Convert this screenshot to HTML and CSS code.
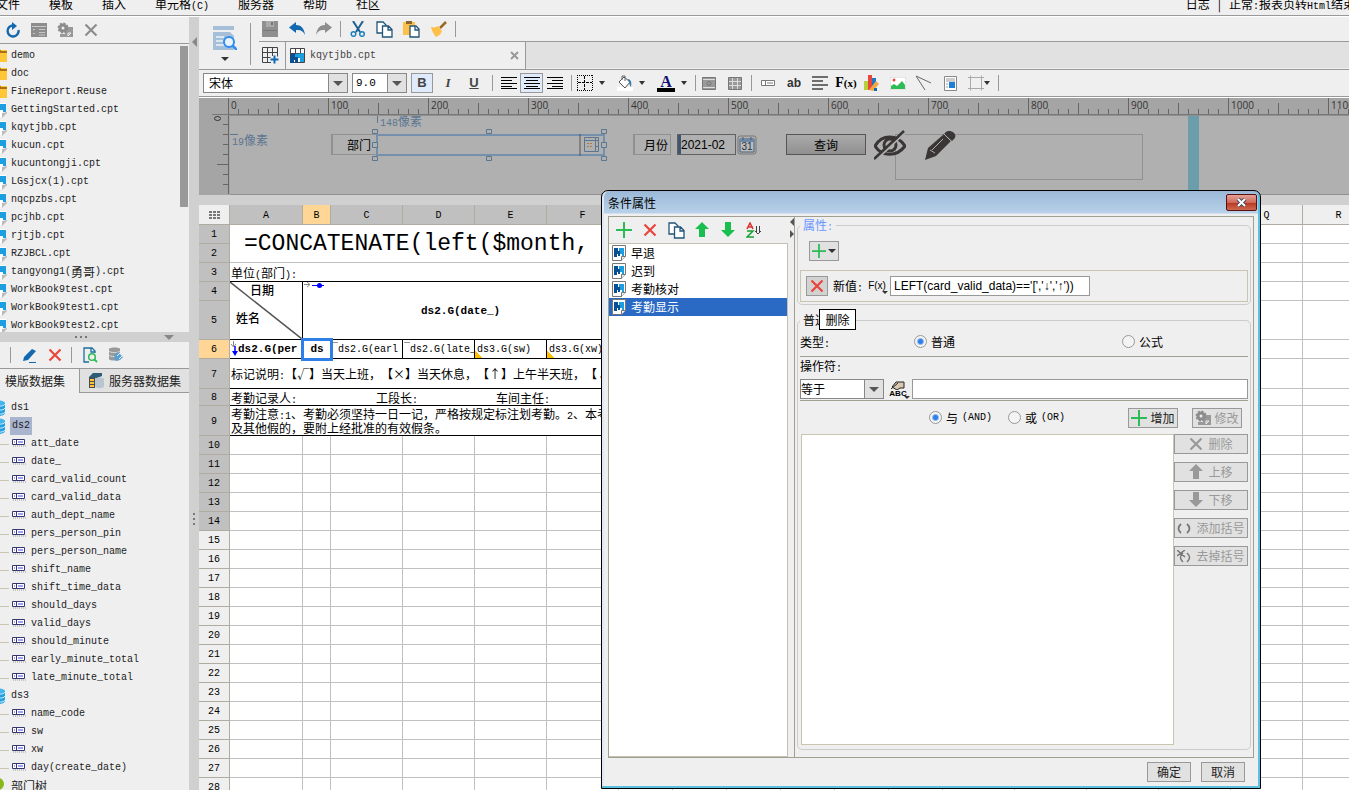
FILE: index.html
```html
<!DOCTYPE html>
<html lang="zh-CN">
<head>
<meta charset="utf-8">
<title>kqytjbb.cpt</title>
<link rel="stylesheet" href="styles.css">
</head>
<body>
<svg class="defs" aria-hidden="true">
  <symbol id="folder" viewBox="0 0 16 16"><path d="M0 2h16v12H0z" fill="#ffc637"/><path d="M0 1h9l1 2h6v2H0z" fill="#a96f14"/></symbol>
  <symbol id="cpt" viewBox="0 0 16 16"><path d="M1 1h14v9l-5 5H1z" fill="#fff"/><path d="M3 2h12v8h-3V8H8v4H3z" fill="#1b9fe0"/><path d="M16 10v1l-5 5v-5z" fill="#bbb"/></symbol>
  <symbol id="rpt" viewBox="0 0 14 16"><path d="M.5.5h13v11l-4 4h-9z" fill="#fff" stroke="#777"/><path d="M2 3h4v3h2v5H6V9H5v3H2z" fill="#0b4f93"/><path d="M7 3h5v9h-2V9H8V6H7z" fill="#1b9fe0"/><path d="M9.500 15.500v-4h4" fill="#eee" stroke="#777"/></symbol>
  <symbol id="db" viewBox="0 0 16 16"><path d="M1 3v10c0 4 14 4 14 0V3z" fill="#26a0e0"/><ellipse cx="8" cy="3" rx="7" ry="2.500" fill="#45b5ee"/><path d="M1 4c0 3 14 3 14 0M1 8c0 3 14 3 14 0M1 12c0 3 14 3 14 0" fill="none" stroke="#d8effb"/></symbol>
  <symbol id="field" viewBox="0 0 14 8"><path d="M.5.5h12v5H.5zM4.500 1v4" fill="#fff" stroke="#34386e"/><path d="M2 3h1M6 3h5" stroke="#3c3cff"/><path d="M1 7h13" stroke="#999" stroke-dasharray="1 1"/></symbol>
  <symbol id="tree" viewBox="0 0 16 16"><circle cx="8" cy="6" r="6" fill="#86b817"/><path d="M7 11h3v5H7z" fill="#8a5a2b"/></symbol>
  <symbol id="cross" viewBox="0 0 14 14"><path d="M1.500 1.500l11 11M12.500 1.500l-11 11" fill="none" stroke="currentColor" stroke-width="2.200"/></symbol>
  <symbol id="plus" viewBox="0 0 16 16"><path d="M8 0v16M0 8h16" stroke="#2dbb55" stroke-width="2"/></symbol>
  <symbol id="up" viewBox="0 0 14 16"><path d="M7 0l7 7h-4v8H4V7H0z" fill="currentColor"/></symbol>
  <symbol id="down" viewBox="0 0 14 16"><path d="M7 15L0 8h4V0h6v8h4z" fill="currentColor"/></symbol>
  <symbol id="gear" viewBox="0 0 16 16"><path d="M8 5h8v10H3v-3h5z" fill="#999"/><circle cx="6" cy="6" r="4.500" fill="#8c8c8c" stroke="#8c8c8c" stroke-width="2" stroke-dasharray="2 1.500"/><circle cx="6" cy="6" r="1.500" fill="#eee"/><path d="M11 14v-3h3z" fill="none" stroke="#eee"/></symbol>
  <symbol id="copy" viewBox="0 0 17 17"><path d="M1 1h6l3 3v8H1z" fill="#fff" stroke="#22557a" stroke-width="1.300"/><path d="M6.500 5h6l3.500 3.500V16H6.500zM12 5v4h4" fill="#fff" stroke="#22557a" stroke-width="1.300"/></symbol>
  <symbol id="undo" viewBox="0 0 16 16"><path d="M0 6.500L7 1v3c5 0 8 3 9 10-2-4-4-5.500-9-5v3z" fill="currentColor"/></symbol>
  <symbol id="lines" viewBox="0 0 16 14"><path d="M0 1h16M0 5h11M0 9h16M0 13h11" stroke="#444" stroke-width="1.500"/></symbol>
  <symbol id="cal" viewBox="0 0 20 20"><rect x="1" y="1" width="18" height="18" rx="2" fill="#b0b0b0" stroke="#777"/><path d="M3 4h14v13H3z" fill="#bbb" stroke="#456080"/><path d="M3 4h14v3H3z" fill="#6d88a5"/><path d="M6 2v3M14 2v3" stroke="#456080"/></symbol>
  <symbol id="grip" viewBox="0 0 4 12"><path d="M2 0v12" stroke="#777" stroke-width="2" stroke-dasharray="2 3"/></symbol>
</svg>

<nav class="menubar">
  <span>文件</span><span>模板</span><span>插入</span><span>单元格<i class="m">(C)</i></span><span>服务器</span><span>帮助</span><span>社区</span>
  <span class="log">日志</span><span class="bar">|</span><span class="state">正常<i class="m">:</i>报表页转<i class="m">Html</i>结束</span>
</nav>

<div class="workspace">
  <aside class="sidebar">
    <div class="side-tools">
      <button aria-label="刷新"><svg width="14" height="16" viewBox="0 0 14 16"><path d="M12.500 8a5.500 5.500 0 1 1-5-4.500" fill="none" stroke="#1269b0" stroke-width="2.400"/><path d="M6 0l5 4-5 4z" fill="#1269b0"/></svg></button>
      <button aria-label="属性"><svg width="16" height="14" viewBox="0 0 16 14"><path d="M0 0h16v14H0z" fill="#8d8d8d"/><path d="M1 3.500h14M2 6.500h2M2 10.500h2M8 6.500h6M8 9.500h6M8 12h6" stroke="#c8c8c8"/></svg></button>
      <button aria-label="设置"><svg width="16" height="16"><use href="#gear"/></svg></button>
      <button class="gray" aria-label="删除"><svg width="14" height="14"><use href="#cross"/></svg></button>
    </div>
    <div class="files">
      <ul class="tree m">
        <li><svg><use href="#folder"/></svg>demo</li>
        <li><svg><use href="#folder"/></svg>doc</li>
        <li><svg><use href="#folder"/></svg>FineReport.Reuse</li>
        <li><svg><use href="#cpt"/></svg>GettingStarted.cpt</li>
        <li><svg><use href="#cpt"/></svg>kqytjbb.cpt</li>
        <li><svg><use href="#cpt"/></svg>kucun.cpt</li>
        <li><svg><use href="#cpt"/></svg>kucuntongji.cpt</li>
        <li><svg><use href="#cpt"/></svg>LGsjcx(1).cpt</li>
        <li><svg><use href="#cpt"/></svg>nqcpzbs.cpt</li>
        <li><svg><use href="#cpt"/></svg>pcjhb.cpt</li>
        <li><svg><use href="#cpt"/></svg>rjtjb.cpt</li>
        <li><svg><use href="#cpt"/></svg>RZJBCL.cpt</li>
        <li><svg><use href="#cpt"/></svg>tangyong1(<b class="h">勇哥</b>).cpt</li>
        <li><svg><use href="#cpt"/></svg>WorkBook9test.cpt</li>
        <li><svg><use href="#cpt"/></svg>WorkBook9test1.cpt</li>
        <li><svg><use href="#cpt"/></svg>WorkBook9test2.cpt</li>
      </ul>
      <div class="scroll"><div class="thumb"></div></div>
    </div>
    <div class="hsplit"><svg width="12" height="4" viewBox="0 0 12 4"><path d="M0 2h12" stroke="#777" stroke-width="2" stroke-dasharray="2 3"/></svg><svg width="10" height="5" viewBox="0 0 10 5"><path d="M0 0h10L5 5z" fill="#888"/></svg></div>
    <div class="side-tools data-tools">
      <i class="vsep"></i>
      <button aria-label="编辑"><svg width="15" height="15" viewBox="0 0 15 15"><path d="M1 13l1-4 8-8 4 2-8 9z" fill="#1269b0"/><path d="M7 14.500h7" stroke="#1269b0"/></svg></button>
      <button class="red" aria-label="删除"><svg width="14" height="14"><use href="#cross"/></svg></button>
      <i class="vsep"></i>
      <button aria-label="预览"><svg width="15" height="16" viewBox="0 0 15 16"><path d="M12 6V4L9 1H1v14h5M8 1v4h4" fill="none" stroke="#1d6f9c" stroke-width="1.300"/><circle cx="9" cy="10" r="3.300" fill="none" stroke="#2dbb55" stroke-width="1.500"/><path d="M11 12l3 3" stroke="#2dbb55" stroke-width="1.800"/></svg></button>
      <button aria-label="连接"><svg width="16" height="16" viewBox="0 0 16 16"><path d="M1 2c0-2 11-2 11 0v10c0 2-11 2-11 0z" fill="#999"/><path d="M1 4c0 2 11 2 11 0M1 8c0 2 11 2 11 0" stroke="#ddd" fill="none"/><path d="M10 5l5 5-3 3-4 1-2-3 1-4z" fill="#5b9fd0"/><path d="M9 9l4-4M11 12l3-3" stroke="#e6f2fa"/></svg></button>
    </div>
    <div class="side-tabs">
      <button class="on">模版数据集</button>
      <button><svg width="17" height="16" viewBox="0 0 17 16"><path d="M1 4l4-4h9v3l-5 2H1z" fill="#2f5d77"/><path d="M1 5h6v10H1z" fill="#4a4a4a"/><path d="M2 7h4M2 10h4M2 13h4" stroke="#ffc637" stroke-width="2"/><path d="M7 6c0-2 9-2 9 0v7c0 3-9 3-9 0z" fill="#b9c6cf"/></svg>服务器数据集</button>
    </div>
    <ul class="tree data m">
      <li><svg><use href="#db"/></svg>ds1</li>
      <li><svg><use href="#db"/></svg><mark>ds2</mark></li>
      <li class="f"><svg><use href="#field"/></svg>att_date</li>
      <li class="f"><svg><use href="#field"/></svg>date_</li>
      <li class="f"><svg><use href="#field"/></svg>card_valid_count</li>
      <li class="f"><svg><use href="#field"/></svg>card_valid_data</li>
      <li class="f"><svg><use href="#field"/></svg>auth_dept_name</li>
      <li class="f"><svg><use href="#field"/></svg>pers_person_pin</li>
      <li class="f"><svg><use href="#field"/></svg>pers_person_name</li>
      <li class="f"><svg><use href="#field"/></svg>shift_name</li>
      <li class="f"><svg><use href="#field"/></svg>shift_time_data</li>
      <li class="f"><svg><use href="#field"/></svg>should_days</li>
      <li class="f"><svg><use href="#field"/></svg>valid_days</li>
      <li class="f"><svg><use href="#field"/></svg>should_minute</li>
      <li class="f"><svg><use href="#field"/></svg>early_minute_total</li>
      <li class="f"><svg><use href="#field"/></svg>late_minute_total</li>
      <li><svg><use href="#db"/></svg>ds3</li>
      <li class="f"><svg><use href="#field"/></svg>name_code</li>
      <li class="f"><svg><use href="#field"/></svg>sw</li>
      <li class="f"><svg><use href="#field"/></svg>xw</li>
      <li class="f"><svg><use href="#field"/></svg>day(create_date)</li>
      <li><svg><use href="#tree"/></svg><b class="h">部门树</b></li>
    </ul>
  </aside>

  <div class="vsplit"><svg width="5" height="10" viewBox="0 0 5 10"><path d="M5 0v10L0 5z" fill="#888"/></svg><svg class="grip" width="4" height="12"><use href="#grip"/></svg></div>

  <main class="editor">
    <header class="top">
      <button class="preview" aria-label="预览"><svg width="24" height="24" viewBox="0 0 24 24"><path d="M0 0h21v4H0zM0 6h17l4 4v14H0z" fill="#a5bfd8"/><path d="M3 11h8M3 15h7M3 19h8" stroke="#eef3f8" stroke-width="1.500"/><circle cx="16" cy="16" r="5" fill="#eaf2fb" stroke="#2f8cf0" stroke-width="2"/><path d="M19.500 19.500L24 24" stroke="#2f8cf0" stroke-width="2.500"/></svg><i class="caret"></i></button>
      <i class="tall-sep"></i>
      <div class="top-main">
        <div class="tools">
          <button aria-label="保存"><svg width="16" height="16" viewBox="0 0 16 16"><path d="M0 0h16v16H0z" fill="#8f8f8f"/><path d="M4 0h8v6H4z" fill="#aaa"/><path d="M9 1h2v3H9zM1 9h14v1H1z" fill="#777"/></svg></button>
          <button class="blue" aria-label="撤销"><svg width="16" height="16"><use href="#undo"/></svg></button>
          <button class="gray flip" aria-label="重做"><svg width="16" height="16"><use href="#undo"/></svg></button>
          <i class="vsep"></i>
          <button aria-label="剪切"><svg width="16" height="16" viewBox="0 0 16 16"><path d="M3 0l7 11M13 0L6 11" stroke="#1d5f93" stroke-width="2"/><circle cx="3.500" cy="13" r="2.300" fill="none" stroke="#1d80c0" stroke-width="1.500"/><circle cx="12" cy="13" r="2.300" fill="none" stroke="#1d80c0" stroke-width="1.500"/></svg></button>
          <button aria-label="复制"><svg width="17" height="17"><use href="#copy"/></svg></button>
          <button aria-label="粘贴"><svg width="17" height="17" viewBox="0 0 17 17"><path d="M0 1h12v13H0z" fill="#ffc04a"/><path d="M3 0h6v3H3z" fill="#8b6630"/><path d="M7 5h6l3 3v8H7zM12 5v4h4" fill="#fff" stroke="#22557a" stroke-width="1.300"/></svg></button>
          <button aria-label="格式刷"><svg width="16" height="16" viewBox="0 0 16 16"><path d="M9 7l6-6" stroke="#9a6a25" stroke-width="2.500"/><path d="M0 6c4 1 5 0 7-1l4 5c-1 3-3 5-6 6-2-3-4-5-5-10z" fill="#ffc04a"/></svg></button>
          <i class="vsep"></i>
        </div>
        <div class="doc-tabs">
          <button class="new" aria-label="新建"><svg width="17" height="17" viewBox="0 0 17 17"><path d="M.5.5h15v9M9 15.500H.5V.5M.5 5.500h15M.5 10.500h8M5.500 1v14M10.500 1v8" fill="none" stroke="#444"/><path d="M12.500 8.500v8M8.500 12.500h8" stroke="#1269b0" stroke-width="2"/></svg></button>
          <div class="doc-tab m"><svg width="15" height="15" viewBox="0 0 15 15"><path d="M.5.5h14v14H.5zM5.500 0v6M10.500 0v6M0 5.500h15" fill="#fff" stroke="#444"/><path d="M0 6h5v3h3v6H5v-3H4v3H0z" fill="#0b4f93"/><path d="M5 6l9-1v9h-4v-4H8V9H5z" fill="#1b9fe0"/></svg>kqytjbb.cpt<button aria-label="关闭"><svg width="9" height="9" viewBox="0 0 9 9"><path d="M1 1l7 7M8 1L1 8" stroke="#999" stroke-width="2"/></svg></button></div>
          <div class="rest"></div>
        </div>
      </div>
    </header>

    <div class="format">
      <div class="combo font"><select aria-label="字体"><option>宋体</option></select><i><b class="caret"></b></i></div>
      <div class="combo size"><select class="m" aria-label="字号"><option>9.0</option></select><i><b class="caret"></b></i></div>
      <button class="t on"><b>B</b></button><button class="t it">I</button><button class="t un">U</button>
      <i class="vsep w3"></i>
      <button class="al" aria-label="左对齐"><svg width="16" height="12" viewBox="0 0 16 12"><path d="M0 .5h16M0 3.500h11M0 6.500h16M0 9.500h11M0 11.500h16" stroke="#000"/></svg></button>
      <button class="al on" aria-label="居中"><svg width="16" height="12" viewBox="0 0 16 12"><path d="M0 .5h16M2 3.500h12M0 6.500h16M2 9.500h12M0 11.500h16" stroke="#000"/></svg></button>
      <button class="al" aria-label="右对齐"><svg width="16" height="12" viewBox="0 0 16 12"><path d="M0 .5h16M5 3.500h11M0 6.500h16M5 9.500h11M0 11.500h16" stroke="#000"/></svg></button>
      <i class="vsep w5"></i>
      <button class="dd" aria-label="边框"><svg width="16" height="16" viewBox="0 0 16 16"><path d="M0 .5h16M0 15.500h16M.5 0v16M15.500 0v16" stroke="#000" stroke-dasharray="1 1"/><path d="M7.500 1v14M1 7.500h14" stroke="#000" stroke-dasharray="3 1"/></svg><i class="caret"></i></button>
      <button class="dd" aria-label="填充"><svg width="16" height="16" viewBox="0 0 16 16"><path d="M0 12h16v4H0z" fill="#fff"/><path d="M2 7l5-5 6 5-5 6z" fill="#fff" stroke="#555"/><path d="M5 5V1h3v5" fill="none" stroke="#666"/><path d="M10 4c4 0 5 3 4 8-2-2-1-5-4-8z" fill="#3a78a8"/></svg><i class="caret"></i></button>
      <button class="dd ink" aria-label="字体颜色"><span>A</span><i class="caret"></i></button>
      <i class="vsep w1"></i>
      <button aria-label="合并"><svg width="14" height="13" viewBox="0 0 14 13"><path d="M.5.5h13v12H.5z" fill="#999" stroke="#777"/><path d="M1 2.500h12M1 10.500h12" stroke="#ddd"/><circle cx="7" cy="6.500" r="2" fill="none" stroke="#777"/></svg></button>
      <button aria-label="拆分"><svg width="14" height="13" viewBox="0 0 14 13"><path d="M.5.5h13v12H.5z" fill="#999" stroke="#777"/><path d="M1 4.500h12M1 8.500h12M4.500 1v11M9.500 1v11" stroke="#ddd"/></svg></button>
      <i class="vsep w2"></i>
      <button aria-label="控件"><svg width="14" height="6" viewBox="0 0 14 6"><path d="M.5.5h13v5H.5zM4.500 1v4M6 3h6" fill="#fff" stroke="#777"/></svg></button>
      <button class="ab">ab</button>
      <button aria-label="富文本"><svg width="16" height="14"><use href="#lines"/></svg></button>
      <button class="fx">F<small>(x)</small></button>
      <button aria-label="图表"><svg width="16" height="16" viewBox="0 0 16 16"><path d="M0 6h4v9H0z" fill="#b8cf3b"/><path d="M4 0h4v15H4z" fill="#e8453c"/><path d="M8 3h4v8H8z" fill="#1f78c0"/><path d="M5 15l7-9 3 3-6 7z" fill="#f5a742"/><path d="M10 13h3v3h-3z" fill="#1269b0"/></svg></button>
      <button aria-label="图片"><svg width="16" height="13" viewBox="0 0 16 13"><path d="M0 0h16v13H0z" fill="#fff" stroke="#ccc"/><path d="M1 12V9l3-2 3 2 5-5 3 4v4z" fill="#2dbb55"/><circle cx="4" cy="3" r="1.500" fill="#e8453c"/></svg></button>
      <button aria-label="斜线"><svg width="16" height="16" viewBox="0 0 16 16"><path d="M0 1l15 7M0 1l9 14" stroke="#666" fill="none"/></svg></button>
      <button aria-label="子报表"><svg width="13" height="15" viewBox="0 0 13 15"><path d="M.5.5h12v14H.5z" fill="#fff" stroke="#888"/><path d="M2 3h9M2 5h9M2 8h2M2 11h2" stroke="#999"/><path d="M5 6h6v6H5z" fill="#1b7fd8"/></svg></button>
      <button class="dd box" aria-label="悬浮元素"><svg width="16" height="16" viewBox="0 0 16 16"><path d="M2.500.5v15M13.500.5v15M0 2.500h16M0 13.500h16" stroke="#aaa" fill="none"/></svg><i class="caret"></i></button>
      <i class="vsep w3"></i>
    </div>

    <section class="pane">
      <div class="ruler">
        <svg class="ticks" width="100%" height="17"><defs><pattern id="tk" width="100" height="17" patternUnits="userSpaceOnUse"><path d="M.5 0v17M50.500 5v12M10.500 11v6M20.500 11v6M30.500 11v6M40.500 11v6M60.500 11v6M70.500 11v6M80.500 11v6M90.500 11v6" stroke="#666"/></pattern></defs><rect width="100%" height="17" fill="url(#tk)"/></svg>
        <div class="nums"><span>0</span><span>100</span><span>200</span><span>300</span><span>400</span><span>500</span><span>600</span><span>700</span><span>800</span><span>900</span><span>1000</span><span>1100</span></div>
      </div>
      <div class="pane-row">
        <div class="vruler"><svg width="17" height="79" viewBox="0 0 17 79"><path d="M16.500 0v79M11 9.500h6M11 19.500h6M11 29.500h6M11 39.500h6M5 49.500h12M11 59.500h6M11 69.500h6" stroke="#666"/><ellipse cx="5.500" cy="3.500" rx="3" ry="2" fill="none" stroke="#333"/></svg></div>
        <div class="canvas">
          <svg class="w guides" width="150" height="22" viewBox="0 0 150 22"><path d="M0 19.500h8M147.500 0v8" stroke="#5d7690"/></svg>
          <span class="w dist d1"><i class="m">19</i>像素</span>
          <span class="w dist d2"><i class="m">148</i>像素</span>
          <label class="w lab l1" for="dept">部门</label>
          <input class="w dept" id="dept">
          <svg class="w handles" width="235" height="33" viewBox="0 0 235 33" fill="#b0b0b0" stroke="#5d7690"><path d="M.5.500h5v4h-5zM.5 13.500h5v5h-5zM.5 27.500h5v4h-5zM114.500.500h5v4h-5zM114.500 27.500h5v4h-5zM229.500.500h5v4h-5zM229.500 13.500h5v5h-5zM229.500 27.500h5v4h-5z"/><path d="M208 5v22" stroke="#555"/><path d="M212.500 8.500h14v14h-14zM212.500 11.500h14M223.500 8.500v14M223.500 17.500h3" fill="none"/><path d="M215 14.500h6M215 17.500h6" stroke="#b07a40" stroke-dasharray="2 1"/></svg>
          <label class="w lab l2" for="month">月份</label>
          <input class="w month" id="month" value="2021-02">
          <button class="w cal" aria-label="选择日期"><svg width="20" height="20"><use href="#cal"/></svg><span>31</span></button>
          <button class="w query">查询</button>
          <input class="w free" aria-label="文本">
          <svg class="w eye" width="32" height="30" viewBox="0 0 32 30"><path d="M1 16C8 4 23 4 31 16 23 27 8 27 1 16z" fill="none" stroke="#393635" stroke-width="3"/><circle cx="16" cy="15" r="6" fill="none" stroke="#393635" stroke-width="3"/><path d="M3 29L32 2" stroke="#b0b0b0" stroke-width="2"/><path d="M0 29L30 1" stroke="#393635" stroke-width="2.500"/></svg>
          <svg class="w pen" width="32" height="30" viewBox="0 0 32 30"><path d="M0 30l3-12L19 4l7 7-15 15z" fill="#393635"/><path d="M20 3c4-5 14 1 9 6l-2 2-8-7z" fill="#393635"/><path d="M7 20L18 9M10 23l-5-3M18 3l8 8" stroke="#b0b0b0"/></svg>
          <i class="w edge"></i>
        </div>
      </div>
    </section>

    <table class="sheet">
      <colgroup><col class="ch"><col class="ca"><col class="cb"><col class="c" span="4"><col class="n" span="6"><col class="c" span="6"></colgroup>
      <thead><tr><th class="corner"><svg width="11" height="8" viewBox="0 0 11 8"><path d="M0 1h11M0 4h11M0 7h11" stroke="#777" stroke-width="2" stroke-dasharray="3 1"/></svg></th><th class="g">A</th><th class="s">B</th><th class="g">C</th><th class="g">D</th><th class="g">E</th><th class="g">F</th><th class="g">G</th><th>H</th><th>I</th><th>J</th><th>K</th><th>L</th><th>M</th><th>N</th><th>O</th><th>P</th><th>Q</th><th>R</th></tr></thead>
      <tbody>
        <tr><th class="g">1</th><td class="title" rowspan="2" colspan="16">=CONCATENATE(left($month,</td><td></td><td></td></tr>
        <tr><th class="g">2</th><td></td><td></td></tr>
        <tr><th class="g">3</th><td class="k" colspan="16">单位<i class="m">(</i>部门<i class="m">):</i></td><td></td><td></td></tr>
        <tr><th class="g">4</th><td class="k kr diag" rowspan="2"><div><svg viewBox="0 0 72 57" preserveAspectRatio="none"><path d="M0 0l72 57" stroke="#555" stroke-width="1.500"/></svg><span>日期</span><span>姓名</span></div></td><td class="k date" rowspan="2" colspan="15"><div class="dcell"><svg width="20" height="7" viewBox="0 0 20 7"><path d="M0 2.500h5M3 0l3 2.500L3 5" stroke="#888" fill="none"/><path d="M8 3.500h12" stroke="#00f"/><circle cx="15.500" cy="3.500" r="2.500" fill="#00f"/></svg><b>ds2.G(date_)</b></div></td><td></td><td></td></tr>
        <tr class="r5"><th class="g">5</th><td></td><td></td></tr>
        <tr class="r6 m"><th class="s">6</th><td class="k kr pa"><svg width="7" height="16" viewBox="0 0 7 16"><path d="M2.500 0v5M0 3l2.500 3L5 3" stroke="#888" fill="none"/><path d="M4 5v6" stroke="#00f" stroke-width="1.500"/><path d="M1 10h6l-3 5z" fill="#00f"/></svg><b>ds2.G(per</b></td><td class="k kr sel"><b>ds</b></td><td class="k kr ar">ds2.G(earl</td><td class="k kr ar">ds2.G(late_</td><td class="k kr ar tri">ds3.G(sw)</td><td class="k kr ar tri">ds3.G(xw)</td><td class="k" colspan="10"></td><td></td><td></td></tr>
        <tr class="r7"><th class="g">7</th><td class="k" colspan="16">标记说明<i class="m">:</i>【√】当天上班，【×】当天休息，【↑】上午半天班，【↓】下午半天班</td><td></td><td></td></tr>
        <tr class="r8"><th class="g">8</th><td class="k" colspan="16"><div class="sign"><span>考勤记录人<i class="m">:</i></span><span>工段长<i class="m">:</i></span><span>车间主任<i class="m">:</i></span></div></td><td></td><td></td></tr>
        <tr class="r7 r9"><th class="g">9</th><td class="k" colspan="16">考勤注意<i class="m">:1</i>、考勤必须坚持一日一记，严格按规定标注划考勤。<i class="m">2</i>、本考勤表<br>及其他假的，要附上经批准的有效假条。</td><td></td><td></td></tr>
        <tr><th class="g">10</th><td><td><td><td><td><td><td><td><td><td><td><td><td><td><td><td><td><td></tr>
        <tr><th class="g">11</th><td><td><td><td><td><td><td><td><td><td><td><td><td><td><td><td><td><td></tr>
        <tr><th class="g">12</th><td><td><td><td><td><td><td><td><td><td><td><td><td><td><td><td><td><td></tr>
        <tr><th class="g">13</th><td><td><td><td><td><td><td><td><td><td><td><td><td><td><td><td><td><td></tr>
        <tr><th class="g">14</th><td><td><td><td><td><td><td><td><td><td><td><td><td><td><td><td><td><td></tr>
        <tr><th>15</th><td><td><td><td><td><td><td><td><td><td><td><td><td><td><td><td><td><td></tr>
        <tr><th>16</th><td><td><td><td><td><td><td><td><td><td><td><td><td><td><td><td><td><td></tr>
        <tr><th>17</th><td><td><td><td><td><td><td><td><td><td><td><td><td><td><td><td><td><td></tr>
        <tr><th>18</th><td><td><td><td><td><td><td><td><td><td><td><td><td><td><td><td><td><td></tr>
        <tr><th>19</th><td><td><td><td><td><td><td><td><td><td><td><td><td><td><td><td><td><td></tr>
        <tr><th>20</th><td><td><td><td><td><td><td><td><td><td><td><td><td><td><td><td><td><td></tr>
        <tr><th>21</th><td><td><td><td><td><td><td><td><td><td><td><td><td><td><td><td><td><td></tr>
        <tr><th>22</th><td><td><td><td><td><td><td><td><td><td><td><td><td><td><td><td><td><td></tr>
        <tr><th>23</th><td><td><td><td><td><td><td><td><td><td><td><td><td><td><td><td><td><td></tr>
        <tr><th>24</th><td><td><td><td><td><td><td><td><td><td><td><td><td><td><td><td><td><td></tr>
        <tr><th>25</th><td><td><td><td><td><td><td><td><td><td><td><td><td><td><td><td><td><td></tr>
        <tr><th>26</th><td><td><td><td><td><td><td><td><td><td><td><td><td><td><td><td><td><td></tr>
        <tr><th>27</th><td><td><td><td><td><td><td><td><td><td><td><td><td><td><td><td><td><td></tr>
        <tr><th>28</th><td><td><td><td><td><td><td><td><td><td><td><td><td><td><td><td><td><td></tr>
      </tbody>
    </table>
  </main>
</div>

<div class="dialog" role="dialog" aria-labelledby="dt">
  <div class="titlebar"><span id="dt">条件属性</span><button aria-label="关闭"><svg width="11" height="9" viewBox="0 0 11 9"><path d="M2 1l7 7M9 1L2 8" stroke="#4a4a5a" stroke-width="4"/><path d="M2 1l7 7M9 1L2 8" stroke="#fff" stroke-width="2"/></svg></button></div>
  <div class="dbody">
    <div class="conds">
      <div class="ctools">
        <button aria-label="增加"><svg width="16" height="16"><use href="#plus"/></svg></button>
        <button class="red" aria-label="删除"><svg width="14" height="14"><use href="#cross"/></svg></button>
        <button aria-label="复制"><svg width="17" height="17"><use href="#copy"/></svg></button>
        <button class="green" aria-label="上移"><svg width="14" height="16"><use href="#up"/></svg></button>
        <button class="green" aria-label="下移"><svg width="14" height="16"><use href="#down"/></svg></button>
        <button class="az" aria-label="排序"><svg width="16" height="16" viewBox="0 0 16 16" fill="none"><path d="M1 7l3-6 3 6M2 5h5" stroke="#e03030" stroke-width="1.500"/><path d="M1 9h6l-6 6h7" stroke="#18a030" stroke-width="1.500"/><path d="M10.500 4v6M13.500 4v6M9 9l3 3 3-3" stroke="#444"/></svg></button>
      </div>
      <ul>
        <li><svg><use href="#rpt"/></svg>早退</li>
        <li><svg><use href="#rpt"/></svg>迟到</li>
        <li><svg><use href="#rpt"/></svg>考勤核对</li>
        <li class="on"><svg><use href="#rpt"/></svg>考勤显示</li>
      </ul>
    </div>
    <div class="dsplit"><svg width="4" height="20" viewBox="0 0 4 20"><path d="M4 0v8L0 4zM0 12v8l4-4z" fill="#555"/></svg></div>
    <div class="props">
      <fieldset class="attr">
        <legend>属性<i class="m">:</i></legend>
        <button class="btn addp" aria-label="增加属性"><svg width="14" height="14"><use href="#plus"/></svg><i class="caret"></i></button>
        <div class="newval">
          <button class="btn del" aria-label="删除"><svg width="14" height="14"><use href="#cross"/></svg></button>
          <label for="nv">新值<i class="m">:</i></label>
          <button class="fxs">F(x)<i class="caret"></i></button>
          <input id="nv" value="LEFT(card_valid_data)=='[','↓','↑'))">
          <span class="tip" role="tooltip">删除</span>
        </div>
      </fieldset>
      <fieldset class="cond">
        <legend>普通</legend>
        <div class="row kind"><span>类型<i class="m">:</i></span><label><input type="radio" name="k" checked>普通</label><label><input type="radio" name="k">公式</label></div>
        <div class="opn"><label for="op">操作符<i class="m">:</i></label></div>
        <div class="row op">
          <div class="combo"><select id="op"><option>等于</option></select><i><b class="caret"></b></i></div>
          <button class="abc" aria-label="值类型"><svg width="14" height="9" viewBox="0 0 14 9"><path d="M1 6l4-5h8v6H9L6 9z" fill="#d8c8b0" stroke="#222"/><path d="M0 8l7-6" stroke="#222"/></svg>ABC<i class="caret"></i></button>
          <input aria-label="值">
        </div>
        <div class="row logic">
          <label><input type="radio" name="l" checked>与<i class="m">(AND)</i></label>
          <label><input type="radio" name="l">或<i class="m">(OR)</i></label>
          <button class="btn add"><svg width="16" height="16"><use href="#plus"/></svg>增加</button>
          <button class="btn off" disabled><svg width="16" height="16"><use href="#gear"/></svg>修改</button>
        </div>
        <div class="lower">
          <textarea aria-label="条件"></textarea>
          <div class="acts">
            <button class="btn off" disabled><svg width="14" height="14"><use href="#cross"/></svg>删除</button>
            <button class="btn off" disabled><svg width="14" height="16"><use href="#up"/></svg>上移</button>
            <button class="btn off" disabled><svg width="14" height="16"><use href="#down"/></svg>下移</button>
            <button class="btn off" disabled><svg width="14" height="11" viewBox="0 0 14 11"><path d="M4 1Q-1 5.500 4 10M10 1q5 4.500 0 9" fill="none" stroke="#777" stroke-width="1.800"/></svg>添加括号</button>
            <button class="btn off" disabled><svg width="14" height="13" viewBox="0 0 14 13"><path d="M6 3q-5 4.500 0 9M10 3q5 4.500 0 9M0 0l8 7M8 0L0 6" fill="none" stroke="#777" stroke-width="1.500"/></svg>去掉括号</button>
          </div>
        </div>
      </fieldset>
    </div>
  </div>
  <div class="foot"><button class="btn">确定</button><button class="btn">取消</button></div>
</div>
</body>
</html>
```

FILE: styles.css
```css
* { box-sizing: border-box; }
html, body { height: 100%; margin: 0; }
body {
  display: flex; flex-direction: column; position: relative; overflow: hidden;
  background: #efefef; color: #000;
  font: 12px/16px "Noto Sans CJK SC", "Liberation Sans", sans-serif;
  text-spacing-trim: space-all;
}
.defs { position: absolute; width: 0; height: 0; }
svg { display: block; flex: none; }
i { font-style: normal; }
button, input, select, textarea { font: inherit; color: inherit; margin: 0; padding: 0; border-radius: 0; }
button { display: flex; align-items: center; justify-content: center; background: none; border: 0; }
.m { font-family: "Liberation Mono", "Noto Sans CJK SC", monospace; font-size: 10px; }
i.m { line-height: 0; }
.h { font: 12px/16px "Noto Sans CJK SC", sans-serif; }
.gray { color: #8d8d8d; }
.red { color: #e8453c; }
.blue { color: #1269b0; }
.green { color: #18bf4f; }
.caret { flex: none; width: 0; height: 0; border: 3px solid transparent; border-top: 4px solid #333; border-bottom: 0; }
.vsep { flex: none; width: 1px; height: 16px; margin: 0 3px; background: #999; }
.w1 { margin: 0; } .w2 { margin: 0 3px; } .w3 { margin: 0 4px 0 3px; } .w5 { margin: 0 4px 0 5px; }

.menubar { flex: none; display: flex; align-items: flex-end; gap: 29px; height: 17px; padding-bottom: 4px; margin-left: -4px; overflow: hidden; border-bottom: 1px solid #fff; box-shadow: inset 0 -1px #999; white-space: nowrap; }
.menubar .log { margin-left: auto; }
.menubar .bar { margin: 0 -21px; }
.menubar .state { margin-right: -6px; }

.workspace { flex: 1; display: flex; min-height: 0; }
.sidebar { flex: none; width: 189px; display: flex; flex-direction: column; overflow: hidden; }
.side-tools { flex: none; display: flex; align-items: center; height: 27px; border-bottom: 1px solid #999; }
.side-tools button { width: 26px; height: 24px; }
.data-tools { height: 27px; padding-left: 7px; }
.data-tools .vsep + button { margin-left: 2px; }
.files { flex: none; display: flex; height: 288px; padding-top: 2px; overflow: hidden; }
.tree { flex: 1; margin: 0; padding: 1px 0 0; list-style: none; color: #222; overflow: hidden; }
.tree li { display: flex; align-items: center; height: 18px; white-space: nowrap; line-height: 18px; }
.tree li svg { width: 16px; height: 16px; margin: 0 4px 0 -9px; }
.tree.data { padding-top: 6px; }
.tree.data li svg { margin-left: -10px; margin-right: 5px; }
.tree.data li.f::before { content: ""; width: 9px; height: 1px; margin-right: 3px; background: #c9c5b1; }
.tree.data li.f svg { width: 14px; height: 8px; margin: 0 5px 2px 0; }
mark { background: #a9b5cf; color: inherit; padding: 0 2px; margin-left: -1px; }
.scroll { width: 9px; padding-right: 1px; }
.thumb { height: 161px; background: #999; }
.hsplit { flex: none; display: flex; align-items: center; height: 10px; padding-left: 75px; gap: 77px; background: #d0d0d0; }
.side-tabs { flex: none; display: flex; height: 24px; }
.side-tabs button { flex: 1; gap: 4px; background: #e1e1e1; border: 1px solid #999; border-width: 0 0 1px 1px; color: #222; white-space: nowrap; }
.side-tabs button.on { flex: none; width: 79px; background: none; border: 0; padding-right: 9px; }
.vsplit { flex: none; width: 10px; display: flex; flex-direction: column; align-items: center; padding-top: 20px; background: #d0d0d0; }
.vsplit .grip { margin-top: 466px; }

.editor { flex: 1; min-width: 0; display: flex; flex-direction: column; overflow: hidden; background: #fff; }
.top { flex: none; display: flex; height: 53px; border-bottom: 1px solid #999; background: #efefef; }
.preview { width: 51px; flex-direction: column; gap: 7px; padding-top: 1px; }
.preview .caret { border-width: 4px 4px 0; }
.tall-sep { width: 1px; margin: 6px 0 4px; background: #999; }
.top-main { flex: 1; display: flex; flex-direction: column; }
.tools { display: flex; align-items: center; height: 25px; padding-left: 5px; }
.tools button { width: 27px; height: 24px; }
.flip svg { transform: scaleX(-1); }
.doc-tabs { flex: none; display: flex; height: 28px; margin-left: 8px; border-top: 1px solid #999; }
.doc-tabs .new { width: 26px; height: 26px; padding-right: 4px; }
.doc-tab { display: flex; align-items: center; width: 241px; gap: 5px; padding: 0 6px 0 4px; background: #efefef; border: 1px solid #999; border-width: 0 1px; color: #444; }
.doc-tab button { margin-left: auto; }
.doc-tabs .rest { flex: 1; height: 26px; background: #e1e1e1; }

.format { flex: none; display: flex; align-items: center; height: 27px; padding-left: 4px; border-bottom: 1px solid #999; background: #efefef; }
.format button { flex: none; width: 26px; height: 20px; }
.combo { flex: none; display: flex; height: 20px; border: 1px solid #888; background: #fff; }
.combo select { flex: 1; min-width: 0; appearance: none; border: 0; background: #fff; padding-left: 5px; }
.combo > i { display: flex; align-items: center; justify-content: center; width: 19px; border-left: 1px solid #888; background: #e1e1e1; }
.combo .caret { border-width: 5px 5px 0; border-top-color: #555; }
.combo.font { width: 145px; margin-right: 4px; }
.combo.size { width: 55px; margin-right: 4px; }
.combo.size select { font-size: 11px; padding-left: 3px; }
.format .t { width: 22px; margin-right: 4px; font: bold 13px/18px "Liberation Sans", sans-serif; color: #444; }
.format .it { font-family: "Liberation Serif", serif; font-style: italic; }
.format .un { text-decoration: underline; }
.format .on { background: #dfeafa; border: 1px solid #999; }
.format .al { width: 23px; }
.format .dd { width: 40px; gap: 6px; justify-content: flex-start; padding-left: 1px; }
.format .dd.ink { width: 39px; }
.format .dd.box { width: 32px; gap: 0; padding-left: 5px; }
.ink span { width: 18px; border-bottom: 4px solid #000; font: bold 16px/13px "Liberation Serif", serif; color: #101070; }
.format .ab { font: bold 12px/16px "Liberation Sans", sans-serif; color: #333; }
.format .fx { font: bold 14px/16px "Liberation Serif", serif; }
.fx small { font-size: 11px; }

.pane { flex: none; display: flex; flex-direction: column; border-top: 1px solid #fff; border-bottom: 10px solid #d0d0d0; background: #a5a5a5; }
.ruler { display: grid; height: 17px; margin-left: 13px; padding-left: 16px; overflow: hidden; border-bottom: 1px solid #777; }
.ruler > * { grid-area: 1 / 1; }
.nums { display: flex; color: #333; font: 10px/14px "Open Sans", sans-serif; overflow: hidden; }
.nums span { flex: none; width: 100px; padding-left: 3px; }
.pane-row { display: flex; height: 80px; }
.vruler { flex: none; width: 31px; padding-left: 13px; }
.canvas { flex: 1; position: relative; background: #b0b0b0; border: 1px solid #909090; border-width: 1px 0; overflow: hidden; }
/* Widgets placed freely on the form canvas */
.w { position: absolute; }
.guides { left: 0; top: -1px; }
.dist { color: #5d7690; }
.d1 { left: 2px; top: 16px; }
.d2 { left: 150px; top: -3px; }
.lab { top: 18px; height: 21px; line-height: 20px; border: 1px solid #909090; border-left-width: 2px; text-align: right; }
.l1 { left: 101px; width: 46px; padding-right: 5px; }
.l2 { left: 403px; width: 38px; padding-right: 2px; }
.dept { left: 146px; top: 18px; width: 229px; height: 22px; border: 2px solid #7590ac; background: none; }
.handles { left: 142px; top: 13px; }
.month { left: 447px; top: 18px; width: 59px; height: 21px; padding-left: 3px; border: 1px solid #606060; background: #b0b0b0; font: 12px/16px "Liberation Sans", sans-serif; box-shadow: inset 3px 0 #405570; }
.cal { left: 507px; top: 18px; width: 20px; height: 21px; display: grid; place-items: center; }
.cal > * { grid-area: 1 / 1; }
.cal span { padding-top: 4px; font: 10px/12px "Liberation Sans", sans-serif; color: #234; }
.query { left: 556px; top: 18px; width: 80px; height: 21px; border: 1px solid #555; background: linear-gradient(#aaa, #909090); }
.free { left: 665px; top: 18px; width: 248px; height: 46px; border: 1px solid #909090; background: none; }
.eye { left: 644px; top: 14px; }
.pen { left: 695px; top: 14px; }
.edge { left: 958px; top: 0; width: 11px; height: 100%; background: #6c9dab; }

.sheet { flex: none; width: max(100%, 1176px); table-layout: fixed; border-collapse: separate; border-spacing: 0; background: #fff; line-height: 15px; }
.ch { width: 31px; } .ca { width: 73px; } .cb { width: 28px; } .c { width: 72px; } .n { width: 54px; }
.sheet th, .sheet td { height: 19px; padding: 0; border: 1px solid #c0c0c0; border-width: 0 1px 1px 0; overflow: hidden; white-space: nowrap; }
.sheet th { padding-top: 2px; font: 10px/14px "Liberation Mono", monospace; background: #efefef; border-color: #b0ada0; }
.sheet thead th { height: 20px; }
.sheet .corner { padding: 0; }
.sheet .corner svg { margin: 0 auto; }
.sheet th.g { background: #c0c0c0; }
.sheet th.s { background: #ffd696; }
.sheet td.title { padding-left: 14px; font: 23px/28px "Liberation Mono", monospace; }
.sheet td.k { padding-left: 1px; border-bottom-color: #000; }
.sheet td.kr { border-right-color: #000; }
.sheet .r5 th, .sheet .r5 td { height: 39px; }
.sheet .r7 th, .sheet .r7 td { height: 30px; }
.sheet .r9 td { line-height: 14px; }
.sheet .r8 th, .sheet .r8 td { height: 17px; }
.sheet td.diag { padding: 0; }
.diag div { display: grid; height: 57px; }
.diag div > * { grid-area: 1 / 1; }
.diag svg { width: 100%; height: 100%; }
.diag span { padding-left: 20px; font-weight: 500; }
.diag span + span { align-self: center; padding: 14px 0 0 6px; }
.dcell { display: grid; height: 57px; }
.dcell > * { grid-area: 1 / 1; }
.dcell b { align-self: center; padding-left: 117px; font: bold 11px/16px "Liberation Mono", monospace; }
.r6 td { font-size: 10px; }
.sheet .r6 td.ar { padding-left: 7px; background: linear-gradient(#999, #999) 1px 2px / 6px 1px no-repeat; }
.sheet .r6 td.tri { padding-left: 2px; background: linear-gradient(45deg, #ffc000 5px, transparent 5px); }
.sheet .pa b { display: inline-block; vertical-align: middle; font-size: 11px; }
.sheet .pa svg { display: inline-block; vertical-align: middle; }
.sheet .sel { text-align: center; outline: 3px solid #2f7fe8; outline-offset: -1px; font-size: 11px; }
.sign { display: flex; }
.sign span { width: 120px; }
.sign span:first-child { width: 145px; }

.dialog { position: absolute; left: 601px; top: 190px; width: 660px; height: 599px; display: flex; flex-direction: column; padding: 1px 6px 4px 6px; border: 1px solid #000; border-radius: 7px 7px 0 0; background: linear-gradient(#9ab8d6, #b9d1ea 22px, #efefef 23px); box-shadow: inset -2px -2px #5cc0e0, inset 2px 0 #dfe9f5; }
.titlebar { flex: none; display: flex; align-items: center; justify-content: space-between; height: 24px; padding-bottom: 3px; }
.titlebar button { width: 31px; height: 17px; margin-right: -3px; border: 1px solid #5a1010; border-radius: 2px; background: linear-gradient(#e4a298, #d0685a 50%, #b8351f 51%, #cc6a50); }
.dbody { flex: 1; display: flex; min-height: 0; border: 1px solid #a09f90; }
.conds { flex: none; width: 179px; display: flex; flex-direction: column; }
.ctools { display: flex; align-items: center; height: 26px; padding-left: 2px; }
.ctools button { width: 26px; height: 24px; }
.conds ul { flex: 1; margin: 0; padding: 0; list-style: none; border: 1px solid #c4c1b0; border-left: 0; background: #fff; }
.conds li { display: flex; align-items: center; gap: 5px; height: 18px; padding-left: 3px; }
.conds li svg { width: 14px; height: 16px; }
.conds .on { background: #2a69c4; color: #fff; }
.dsplit { flex: none; width: 7px; padding: 1px 0 0 2px; border-right: 1px solid #a09f90; }
.props { flex: 1; display: flex; flex-direction: column; padding: 1px 2px 7px; min-width: 0; }
fieldset { min-width: 0; margin: 0; padding: 0 2px 2px; border: 1px solid #ccc; border-radius: 5px; }
legend { padding: 0 3px; line-height: 14px; }
.attr { flex: none; margin-bottom: 8px; }
.attr legend { color: #6a96ff; }
.btn { height: 20px; border: 1px solid #999; background: #e1e1e1; color: #222; gap: 5px; white-space: nowrap; }
.addp { width: 30px; margin: 9px 0 9px 9px; gap: 2px; }
.addp .caret { border-width: 4px 4px 0; }
.newval { position: relative; display: flex; align-items: center; height: 32px; padding-left: 5px; border: 1px solid #c9c5b1; }
.btn.del { width: 22px; background: #d2d2d2; color: #e8453c; }
.newval label { margin: 0 3px 0 5px; }
.fxs { width: 24px; height: 16px; font: 10px/12px "Liberation Sans", sans-serif; }
.fxs .caret, .abc .caret { align-self: flex-end; border-width: 3px 3px 0; margin-left: -4px; }
.newval input { width: 200px; height: 20px; padding-left: 3px; border: 1px solid #999; font: 12px/16px "Liberation Sans", "Noto Sans CJK SC", sans-serif; }
.tip { position: absolute; left: 18px; top: 38px; z-index: 1; width: 37px; height: 21px; line-height: 19px; text-align: center; border: 1px solid #000; background: #fff; }
.cond { flex: 1; display: flex; flex-direction: column; min-height: 0; }
.row { flex: none; display: flex; align-items: center; }
.row label { display: flex; align-items: center; gap: 4px; }
input[type="radio"] { appearance: none; width: 13px; height: 13px; border: 1px solid #999; border-radius: 50%; background: #f4f4f4; }
input[type="radio"]:checked { background: radial-gradient(#2f7fe8 2px, #f4f4f4 4px); }
.kind { height: 30px; border-bottom: 1px solid #a09f90; }
.kind span { flex: none; width: 114px; }
.kind label { flex: none; width: 208px; }
.kind label + label { flex: 1; }
.opn { height: 20px; padding-top: 1px; }
.op { height: 24px; align-items: flex-start; padding-top: 2px; border-bottom: 1px solid #a09f90; }
.op .combo { width: 84px; }
.op select { padding-left: 0; }
.op input { flex: 1; min-width: 0; height: 20px; border: 1px solid #999; background: #fff; }
.abc { position: relative; width: 28px; height: 20px; flex-direction: column; font: bold 8px/8px "Liberation Sans", sans-serif; }
.abc .caret { position: absolute; right: 2px; bottom: 0; }
.logic { height: 33px; padding: 0 6px 0 129px; }
.logic label { width: 79px; }
.logic .btn { width: 50px; margin-left: 14px; gap: 3px; }
.logic .add { margin-left: auto; }
.off { color: #999; }
.lower { flex: 1; display: flex; min-height: 0; padding: 0 0 2px 1px; }
.lower textarea { flex: 1; min-width: 0; border: 1px solid #c9c5b1; background: #fff; resize: none; }
.acts { flex: none; display: flex; flex-direction: column; gap: 8px; width: 74px; }
.foot { flex: none; display: flex; justify-content: flex-end; gap: 10px; padding: 4px 9px 2px; }
.foot .btn { width: 44px; }
```
